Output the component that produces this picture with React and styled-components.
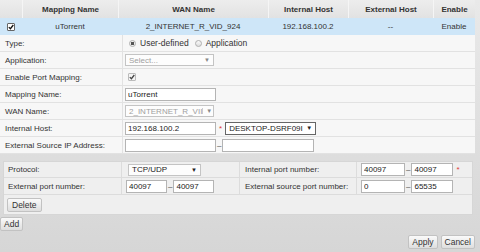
import styled, { createGlobalStyle } from 'styled-components';

const GlobalStyle = createGlobalStyle`
  html, body { margin: 0; padding: 0; }
  body {
    width: 480px;
    height: 252px;
    overflow: hidden;
    font-family: "Liberation Sans", Arial, sans-serif;
    font-size: 8px;
    color: #333;
    background: linear-gradient(#e9e9e9, #d6d6d6);
  }
`;

const Page = styled.div`
  width: 475px;
  display: flex;
  flex-direction: column;
`;

const cols = '22px 96px 150px 80px 85px 42px';

const HeadRow = styled.div`
  display: grid;
  grid-template-columns: ${cols};
  height: 18px;
  background: linear-gradient(#ededed, #e2e2e2);
`;

const HeadCell = styled.div`
  display: flex;
  align-items: center;
  justify-content: center;
  font-weight: bold;
  color: #333;
  border-left: ${p => (p.first ? 'none' : '1px solid #f5f5f5')};
`;

const DataRow = styled.div`
  display: grid;
  grid-template-columns: ${cols};
  height: 17px;
  background: #cee6f8;
`;

const DataCell = styled.div`
  display: flex;
  align-items: center;
  justify-content: center;
  color: #333;
`;

const CheckBox = styled.span`
  width: 8px;
  height: 8px;
  box-sizing: border-box;
  border: 1px solid ${p => (p.light ? '#bbb' : '#666')};
  border-radius: 1px;
  background: ${p => (p.light ? '#f4f4f4' : '#fff')};
  display: inline-flex;
  align-items: center;
  justify-content: center;
  svg { display: block; }
`;

const Check = ({ light }) => (
  <CheckBox light={light}>
    <svg width="6" height="6" viewBox="0 0 6 6">
      <path d="M0.8 3.1 L2.4 4.7 L5.3 1" fill="none" stroke={light ? '#444' : '#111'} strokeWidth="1.3" />
    </svg>
  </CheckBox>
);

const Form = styled.div`
  display: flex;
  flex-direction: column;
  background: #f7f7f7;
`;

const FormRow = styled.div`
  display: grid;
  grid-template-columns: 122px 1fr;
  height: 17px;
  border-bottom: 1px solid #e2e2e2;
  box-sizing: border-box;
`;

const Label = styled.div`
  display: flex;
  align-items: center;
  padding-left: 5px;
  color: #333;
`;

const Value = styled.div`
  display: flex;
  align-items: center;
  padding-left: 2px;
  border-left: 1px solid #e2e2e2;
  gap: 2px;
`;

const TextBox = styled.input`
  box-sizing: border-box;
  width: ${p => p.w || 91}px;
  height: ${p => p.h || 13}px;
  margin: 0;
  padding: 0 2px;
  border: 1px solid #b4b4b4;
  background: #fff;
  font-family: "Liberation Sans", Arial, sans-serif;
  font-size: 8px;
  color: #222;
  outline: none;
`;

const SelectBox = styled.div`
  box-sizing: border-box;
  width: ${p => p.w}px;
  height: ${p => p.h || 12}px;
  border: 1px solid ${p => (p.dark ? '#666' : '#c4c4c4')};
  background: ${p => (p.dark ? '#fff' : '#fdfdfd')};
  display: flex;
  align-items: center;
  justify-content: space-between;
  padding: 0 3px 0 3px;
  color: ${p => (p.muted ? '#a0a0a0' : '#222')};
  overflow: hidden;
  white-space: nowrap;
`;

const Arrow = styled.span`
  font-size: 6px;
  color: ${p => (p.muted ? '#888' : '#222')};
  padding-left: 3px;
  border-left: ${p => (p.bar ? '1px solid #ccc' : 'none')};
`;

const Select = ({ w, h, dark, muted, bar, children }) => (
  <SelectBox w={w} h={h} dark={dark} muted={muted}>
    <span>{children}</span>
    <Arrow muted={muted} bar={bar}>▼</Arrow>
  </SelectBox>
);

const Radio = styled.span`
  width: 7px;
  height: 7px;
  box-sizing: border-box;
  border-radius: 50%;
  border: 1px solid #b0b0b0;
  background: ${p => (p.on ? 'radial-gradient(circle, #555 0 1.6px, #eee 2px)' : 'linear-gradient(#fafafa, #ddd)')};
  margin: 0 2px 0 4px;
  display: inline-block;
`;

const RadioLabel = styled.span`
  color: #333;
  font-size: 8.5px;
`;

const Star = styled.span`
  color: #e03a3a;
  font-size: 8px;
  margin: 0 1px;
`;

const Dash = styled.span`
  color: #444;
  margin: 0 -1px;
`;

const Panel = styled.div`
  margin: 7px 2px 0 3px;
  border: 1px solid #d6d6d6;
  background: #efefef;
  display: flex;
  flex-direction: column;
`;

const PanelRow = styled.div`
  display: grid;
  grid-template-columns: 117px 118px 117px 1fr;
  height: ${p => p.h}px;
  border-bottom: 1px solid #dcdcdc;
  box-sizing: border-box;
`;

const PanelLabel = styled.div`
  display: flex;
  align-items: center;
  padding-left: ${p => p.pad || 4}px;
  border-left: ${p => (p.first ? 'none' : '1px solid #dcdcdc')};
`;

const PanelValue = styled.div`
  display: flex;
  align-items: center;
  padding-left: ${p => p.pad || 4}px;
  border-left: 1px solid #dcdcdc;
  gap: 2px;
`;

const ButtonRow = styled.div`
  display: flex;
  justify-content: ${p => p.end ? 'flex-end' : 'flex-start'};
  align-items: center;
  gap: 3px;
  padding: ${p => p.pad};
`;

const Button = styled.button`
  height: ${p => p.h || 14}px;
  padding: 0 ${p => p.px || 3}px;
  margin: 0;
  font-family: "Liberation Sans", Arial, sans-serif;
  font-size: 8.5px;
  color: #333;
  border: 1px solid #c2c2c2;
  border-radius: 2px;
  background: linear-gradient(#fafafa, #dedede);
  line-height: 1;
`;

const headers = ['', 'Mapping Name', 'WAN Name', 'Internal Host', 'External Host', 'Enable'];

export default function App() {
  return (
    <>
      <GlobalStyle />
      <Page>
        <HeadRow>
          {headers.map((h, i) => (
            <HeadCell key={i} first={i === 0}>{h}</HeadCell>
          ))}
        </HeadRow>
        <DataRow>
          <DataCell><Check /></DataCell>
          <DataCell>uTorrent</DataCell>
          <DataCell>2_INTERNET_R_VID_924</DataCell>
          <DataCell>192.168.100.2</DataCell>
          <DataCell>--</DataCell>
          <DataCell>Enable</DataCell>
        </DataRow>

        <Form>
          <FormRow>
            <Label>Type:</Label>
            <Value>
              <Radio on />
              <RadioLabel>User-defined</RadioLabel>
              <Radio />
              <RadioLabel>Application</RadioLabel>
            </Value>
          </FormRow>
          <FormRow>
            <Label>Application:</Label>
            <Value><Select w={89} muted>Select...</Select></Value>
          </FormRow>
          <FormRow>
            <Label>Enable Port Mapping:</Label>
            <Value style={{ paddingLeft: 5 }}><Check light /></Value>
          </FormRow>
          <FormRow>
            <Label>Mapping Name:</Label>
            <Value><TextBox defaultValue="uTorrent" /></Value>
          </FormRow>
          <FormRow>
            <Label>WAN Name:</Label>
            <Value><Select w={89} muted bar>2_INTERNET_R_VII</Select></Value>
          </FormRow>
          <FormRow>
            <Label>Internal Host:</Label>
            <Value>
              <TextBox defaultValue="192.168.100.2" />
              <Star>*</Star>
              <Select w={91} h={13} dark>DESKTOP-DSRF09I</Select>
            </Value>
          </FormRow>
          <FormRow>
            <Label>External Source IP Address:</Label>
            <Value>
              <TextBox defaultValue="" />
              <Dash>–</Dash>
              <TextBox defaultValue="" w={92} />
            </Value>
          </FormRow>
        </Form>

        <Panel>
          <PanelRow h={16}>
            <PanelLabel first>Protocol:</PanelLabel>
            <PanelValue pad={6}><Select w={73}>TCP/UDP</Select></PanelValue>
            <PanelLabel pad={5}>Internal port number:</PanelLabel>
            <PanelValue pad={4}>
              <TextBox defaultValue="40097" w={44} />
              <Dash>–</Dash>
              <TextBox defaultValue="40097" w={42} />
              <Star>*</Star>
            </PanelValue>
          </PanelRow>
          <PanelRow h={17}>
            <PanelLabel first>External port number:</PanelLabel>
            <PanelValue pad={4}>
              <TextBox defaultValue="40097" w={41} />
              <Dash>–</Dash>
              <TextBox defaultValue="40097" w={41} />
            </PanelValue>
            <PanelLabel pad={5}>External source port number:</PanelLabel>
            <PanelValue pad={4}>
              <TextBox defaultValue="0" w={44} />
              <Dash>–</Dash>
              <TextBox defaultValue="65535" w={42} />
            </PanelValue>
          </PanelRow>
          <ButtonRow pad="3px 0 2px 3px">
            <Button px={4}>Delete</Button>
          </ButtonRow>
        </Panel>

        <ButtonRow pad="2px 0 0 0">
          <Button>Add</Button>
        </ButtonRow>
        <ButtonRow end pad="4px 0 0 0">
          <Button h={14}>Apply</Button>
          <Button h={14}>Cancel</Button>
        </ButtonRow>
      </Page>
    </>
  );
}
